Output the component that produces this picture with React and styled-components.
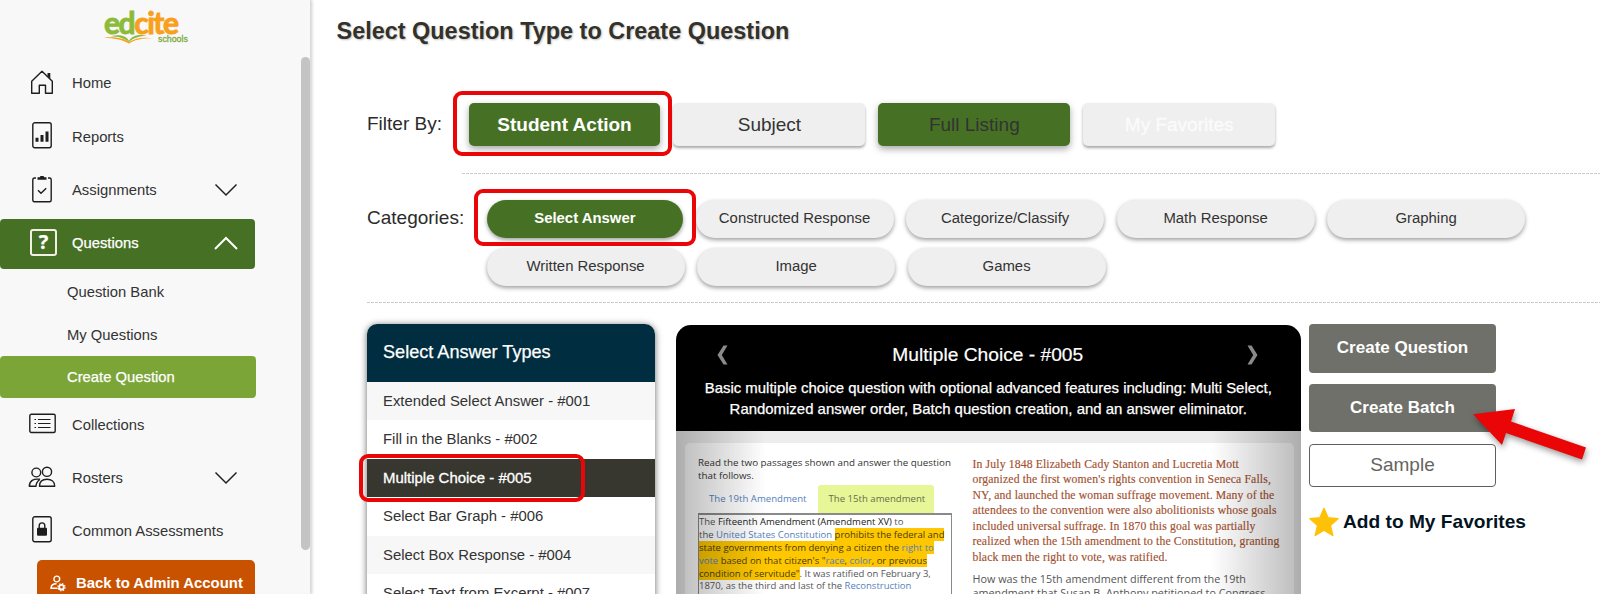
import React from "react";
import styled, { createGlobalStyle, css } from "styled-components";

const GlobalStyle = createGlobalStyle`
  * { box-sizing: border-box; }
  body {
    margin: 0;
    background: #fff;
    font-family: "Liberation Sans", Arial, sans-serif;
    color: #2f2f2f;
    overflow: hidden;
  }
`;

const Page = styled.div`
  display: flex;
  width: 1600px;
  height: 594px;
  overflow: hidden;
`;

/* ---------- Sidebar ---------- */

const Sidebar = styled.aside`
  display: flex;
  flex: none;
  width: 311px;
  height: 594px;
  background: #f8f8f8;
  border-right: 1px solid #dcdcdc;
  box-shadow: 1px 0 3px rgba(0, 0, 0, 0.2);
`;

const SidebarBody = styled.div`
  display: flex;
  flex-direction: column;
  width: 301px;
  > * { flex-shrink: 0; }
`;

const ScrollTrack = styled.div`
  width: 9px;
  padding-top: 57px;
`;

const ScrollThumb = styled.div`
  height: 493px;
  border-radius: 5px;
  background: #c4c4c4;
`;

const Logo = styled.div`
  height: 56px;
  padding: 7px 0 0 104px;
`;

const LogoName = styled.div`
  height: 27px;
  font: 700 30px/31px Lato, sans-serif;
  letter-spacing: -1.45px;
  color: #8cbb3c;
  -webkit-text-stroke: 0.9px currentColor;
  white-space: nowrap;
`;

const LogoAccent = styled.span`
  color: #f99f1c;
`;

const LogoFoot = styled.div`
  display: flex;
  gap: 3px;
  height: 12px;
`;

const LogoSub = styled.span`
  font-size: 8.8px;
  line-height: 10px;
  color: #7eaa3f;
  -webkit-text-stroke: 0.3px #7eaa3f;
`;

const NavItem = styled.div`
  display: flex;
  align-items: center;
  width: 255px;
  height: ${(p) => p.$h || 53}px;
  padding-right: 17px;
  font-size: 14.8px;
  color: #333;
  svg { flex: none; }
  ${(p) =>
    p.$active &&
    css`
      height: 50px;
      margin: 3px 0 2px;
      padding-bottom: 2px;
      border-radius: 4px;
      background: #467125;
      color: #fff;
      -webkit-text-stroke: 0.25px #fff;
    `}
`;

const NavIcon = styled.span`
  display: flex;
  justify-content: center;
  align-items: center;
  width: 84px;
  padding-bottom: 2px;
  margin-right: -12px;
`;

const NavLabel = styled.span`
  flex: 1;
  white-space: nowrap;
`;

const SubItem = styled.div`
  display: flex;
  align-items: center;
  width: 256px;
  height: ${(p) => p.$h || 42}px;
  padding-left: 67px;
  font-size: 14.8px;
  color: #333;
  ${(p) =>
    p.$active &&
    css`
      border-radius: 4px;
      background: #7ca537;
      color: #fff;
      -webkit-text-stroke: 0.25px #fff;
    `}
`;

const AdminButton = styled.div`
  display: flex;
  align-items: center;
  flex: none;
  gap: 10px;
  width: 218px;
  height: 46px;
  margin: 3px 0 0 37px;
  padding-left: 13px;
  border-radius: 5px;
  background: #c95200;
  color: #fff;
  font-size: 14.9px;
  font-weight: 700;
  white-space: nowrap;
`;

/* ---------- Main ---------- */

const Main = styled.main`
  display: flex;
  flex-direction: column;
  width: 1289px;
  padding-top: 16px;
`;

const Title = styled.h1`
  margin: 0 0 57px 25.5px;
  font-size: 23.45px;
  line-height: 30px;
  color: #32322b;
  text-shadow: 1px 1px 2px rgba(0, 0, 0, 0.25);
`;

const Row = styled.div`
  display: flex;
  padding-left: 56px;
`;

const RowLabel = styled.div`
  width: ${(p) => p.$w}px;
  flex: none;
  font-size: 19px;
  line-height: ${(p) => p.$lh}px;
  color: #2b2b2b;
  white-space: nowrap;
`;

const FilterButtons = styled.div`
  display: flex;
  gap: 13px;
`;

const FilterButton = styled.div`
  position: relative;
  width: 191.9px;
  height: 43px;
  border-radius: 5px;
  background: ${(p) => (p.$green ? "#467125" : "#efefef")};
  color: ${(p) => p.$color || "#333"};
  font-size: 19px;
  font-weight: ${(p) => (p.$bold ? 700 : 400)};
  line-height: 43px;
  text-align: center;
  box-shadow: ${(p) =>
    p.$green ? "0 3px 7px rgba(0,0,0,.35)" : "0 2px 3px rgba(0,0,0,.35)"};
  ${(p) => p.$soft && "-webkit-text-stroke: 0.4px #fbfbfb;"}
`;

const Rule = styled.div`
  flex: none;
  height: 1px;
  margin: ${(p) => p.$top}px 0 ${(p) => p.$bottom}px ${(p) => p.$left}px;
  background: repeating-linear-gradient(90deg, #cbcbcb 0 3px, transparent 3px 4px);
`;

const Pills = styled.div`
  display: flex;
  flex-wrap: wrap;
  gap: 10px 12.5px;
  width: 1045px;
`;

const Pill = styled.div`
  position: relative;
  width: ${(p) => (p.$active ? 196.5 : 198)}px;
  height: 38px;
  border-radius: 19px;
  background: ${(p) => (p.$active ? "#467125" : "#efefef")};
  color: ${(p) => (p.$active ? "#fff" : "#333")};
  font-size: 14.9px;
  font-weight: ${(p) => (p.$active ? 700 : 400)};
  line-height: 37px;
  text-align: center;
  box-shadow: 0 2px 4px rgba(0, 0, 0, 0.38);
`;

/* Red outline drawn over a control */
const Marker = styled.span`
  position: absolute;
  z-index: 3;
  top: ${(p) => p.$t}px;
  right: ${(p) => p.$r}px;
  bottom: ${(p) => p.$b}px;
  left: ${(p) => p.$l}px;
  border: 4px solid #ea0606;
  border-radius: 9px;
`;

const Columns = styled.div`
  display: flex;
  align-items: flex-start;
  padding-left: 56px;
`;

const TypeList = styled.div`
  width: 287.5px;
  height: 300px;
  margin-right: 21.5px;
  border-radius: 10px 10px 0 0;
  box-shadow: 0 1px 7px rgba(0, 0, 0, 0.6);
  background: #fff;
`;

const TypeHeader = styled.div`
  height: 58px;
  padding-left: 16px;
  border-radius: 10px 10px 0 0;
  background: #002e40;
  color: #fff;
  font-size: 18.1px;
  line-height: 57px;
  -webkit-text-stroke: 0.25px #fff;
`;

const TypeRow = styled.div`
  position: relative;
  height: 38.4px;
  padding-left: 16px;
  font-size: ${(p) => (p.$active ? 14.95 : 14.87)}px;
  line-height: 38px;
  white-space: nowrap;
  background: ${(p) => (p.$active ? "#37372f" : p.$odd ? "#f7f7f7" : "#fff")};
  color: ${(p) => (p.$active ? "#fff" : "#333")};
  ${(p) => p.$active && "-webkit-text-stroke: 0.3px #fff;"}
`;

const Preview = styled.div`
  width: 624.5px;
  margin: 1px 8.5px 0 0;
  border-radius: 15px 15px 0 0;
  overflow: hidden;
  background: #000;
`;

const PreviewHeader = styled.div`
  height: 106.5px;
  padding: 19px 16px 0 41px;
  color: #fff;
  text-align: center;
`;

const PreviewTop = styled.div`
  display: flex;
  justify-content: space-between;
  align-items: center;
  height: 23px;
  padding-right: 26px;
  font-size: 19.2px;
  -webkit-text-stroke: 0.2px #fff;
`;

const PreviewText = styled.div`
  margin: 10px 12px 0 -13px;
  font-size: 14.95px;
  line-height: 21px;
  white-space: nowrap;
  -webkit-text-stroke: 0.25px #fff;
`;

const PreviewBody = styled.div`
  position: relative;
  height: 180px;
  padding: 11.5px 6.5px 0 9px;
  background: #ededed;
`;

const SideShade = styled.div`
  position: absolute;
  top: 0;
  bottom: 0;
  width: 90px;
  ${(p) => (p.$right ? "right: 0;" : "left: 0;")}
  background: linear-gradient(
    ${(p) => (p.$right ? "270deg" : "90deg")},
    rgba(0, 0, 0, 0.27),
    rgba(0, 0, 0, 0)
  );
`;

const Paper = styled.div`
  display: flex;
  height: 180px;
  padding-left: 13px;
  border-radius: 5px;
  background: #fff;
`;

const LeftPane = styled.div`
  width: 274.5px;
  padding-top: 13.5px;
  font-family: "Open Sans", sans-serif;
  font-size: 9.8px;
  line-height: 13px;
  color: #333;
  white-space: nowrap;
`;

const Tabs = styled.div`
  display: flex;
  height: 27.5px;
  margin-top: 3px;
  font-size: 9.6px;
`;

const Tab = styled.div`
  width: ${(p) => (p.$active ? 116.5 : 119.5)}px;
  padding-left: 11px;
  line-height: 28px;
  color: ${(p) => (p.$active ? "#686f4c" : "#5481bd")};
  border-radius: 3px 3px 0 0;
  background: ${(p) => (p.$active ? "#e7f697" : "transparent")};
`;

const Passage = styled.div`
  width: 254px;
  height: 100px;
  padding: 1.5px 0 0;
  border: 2px solid #8a8a8a;
  border-left-width: 1px;
  border-right-width: 1px;
  font-size: 9.5px;
  line-height: 12.8px;
  color: #555;
`;

const Link = styled.span`
  color: #5481bd;
`;

const Strong = styled.span`
  color: #222;
`;

const Mark = styled.span`
  background: #fec700;
  color: #4a3d08;
`;

const RightPane = styled.div`
  padding-top: 14px;
  white-space: nowrap;
`;

const Story = styled.p`
  margin: 0;
  font-family: "Liberation Serif", serif;
  font-size: 11.7px;
  line-height: 15.5px;
  letter-spacing: 0.14px;
  color: #a2502f;
  -webkit-text-stroke: 0.15px #a2502f;
`;

const Ask = styled.p`
  margin: 6.5px 0 0;
  font-family: "Open Sans", sans-serif;
  font-size: 10.8px;
  line-height: 14.3px;
  color: #555;
`;

const Actions = styled.div`
  display: flex;
  flex-direction: column;
`;

const ActionButton = styled.div`
  position: relative;
  width: 187px;
  height: 48.6px;
  margin-bottom: 11.3px;
  border-radius: 4px;
  background: #70706a;
  color: #fff;
  font-size: 17px;
  font-weight: 700;
  line-height: 48px;
  text-align: center;
`;

const SampleButton = styled.div`
  width: 187px;
  height: 43px;
  border: 1px solid #60605a;
  border-radius: 4px;
  color: #65655f;
  font-size: 19px;
  line-height: 39px;
  text-align: center;
`;

const Favorite = styled.div`
  display: flex;
  align-items: center;
  gap: 4px;
  margin-top: 20px;
  color: #04141f;
  font-size: 19.15px;
  font-weight: 700;
  line-height: 30px;
  white-space: nowrap;
`;

const Pointer = styled.svg`
  position: absolute;
  z-index: 4;
  left: 159px;
  top: 20px;
  filter: drop-shadow(1px 3px 3px rgba(0, 0, 0, 0.4));
`;

/* ---------- Drawings ---------- */

const line = { fill: "none", stroke: "#1d1d1d", strokeWidth: 1.4 };

const HomeIcon = () => (
  <svg width="24" height="26" viewBox="0 0 24 26" {...line}>
    <path d="M1.7 24.2V12.3L12 2.2l10.3 10.1v11.9h-6.8v-7.9H9.3v7.9z" strokeLinejoin="round" />
    <path d="M17.5 4h2.8v5.8l-2.8-2.7z" fill="#1d1d1d" stroke="none" />
  </svg>
);

const ReportsIcon = () => (
  <svg width="20" height="27" viewBox="0 0 20 27" {...line}>
    <rect x="0.8" y="0.8" width="18.4" height="25" rx="2" />
    <path d="M3.5 15.8h3v4h-3zM8.5 13h3v6.8h-3zM13.5 9.5h3v10.300h-3z" fill="#1d1d1d" stroke="none" />
  </svg>
);

const ClipIcon = () => (
  <svg width="20" height="28" viewBox="0 0 20 28" {...line}>
    <path d="M4 3H2.5Q.8 3 .8 4.7v20.3Q.8 26.8 2.5 26.8h15q1.7 0 1.7-1.8V4.7Q19.2 3 17.5 3H16" />
    <path d="M5.5 4.8V2.2h2.2L8.5 1h3l.8 1.2h2.2v2.6z" fill="#1d1d1d" stroke="none" />
    <path d="M6 15.3l3 3 5.2-5" />
  </svg>
);

const QuestionMark = styled.span`
  display: flex;
  align-items: center;
  justify-content: center;
  width: 27px;
  height: 27px;
  margin-left: 3px;
  border: 2px solid #f4efe4;
  border-radius: 3px;
  font: 700 20px/24px "Open Sans", sans-serif;
`;

const CollectionsIcon = () => (
  <svg width="27" height="21" viewBox="0 0 27 21" {...line}>
    <rect x="0.8" y="1.2" width="25.4" height="18.3" rx="1.5" />
    <path d="M9 6.5h12.5M9 10.5h12.5M9 14.5h12.5M5.5 6.5h1.5M5.5 10.5h1.5M5.5 14.5h1.5" strokeWidth="1.1" />
  </svg>
);

const RostersIcon = () => (
  <svg width="28" height="22" viewBox="0 0 28 22" {...line}>
    <circle cx="8.3" cy="6.5" r="4.4" />
    <circle cx="19" cy="5.8" r="4.6" />
    <path d="M11.5 20.3c0-4.5 3-7 7.5-7s7.7 2.5 7.7 7z" strokeLinejoin="round" />
    <path d="M12 13.3c-6.5-1-10.7 1.5-10.7 7h6.700c0-2.500 1.500-5 4-7" strokeLinejoin="round" />
  </svg>
);

const LockIcon = () => (
  <svg width="20" height="27" viewBox="0 0 20 27" {...line}>
    <rect x="0.8" y="0.8" width="18.4" height="25" rx="2" />
    <rect x="5" y="11.8" width="10" height="8" rx="1" fill="#1d1d1d" stroke="none" />
    <path d="M7.2 12v-2.3a2.8 2.8 0 0 1 5.6 0V12" />
  </svg>
);

const Chevron = ({ up }) => (
  <svg width="24" height="14" viewBox="0 0 24 14" fill="none" stroke={up ? "#fff" : "#222"} strokeWidth={up ? 2 : 1.5}>
    <path d={up ? "M1 13L12 2l11 11" : "M1.5 1.5L12 12 22.5 1.5"} />
  </svg>
);

const AdminIcon = () => (
  <svg width="16" height="17" viewBox="0 0 16 17" fill="none" stroke="#fff" strokeWidth="1.4">
    <circle cx="6.8" cy="4" r="2.9" />
    <path d="M7.5 13.3H1c0-3 2-4.5 5.5-4.5" />
    <circle cx="11.5" cy="12.2" r="2.3" strokeWidth="1.8" />
    <circle cx="11.5" cy="12.2" r="3.6" strokeWidth="1.2" strokeDasharray="1.4 1.43" />
  </svg>
);

const BookIcon = () => (
  <svg width="51" height="10" viewBox="0 0 51 10">
    <path d="M0 3.8c9-1.2 19 0 25 4.200C31 3.800 40 2.800 50 4.300c-10-.2-19 .9-25 5.300C18 5.600 10 4.200 0 3.800z" fill="#f99f1c" />
    <path d="M7 2.200c7-2 15-1 18 4.600 3-5.600 11-7 18-4.900-7-.1-13.500 1.700-18 6.100C20 3.800 14 2.400 7 2.200z" fill="#8cbb3c" />
  </svg>
);

const Arrow = ({ right }) => (
  <svg width="11" height="20" viewBox="0 0 11 20" fill="#8a8a8a" transform={right ? "scale(-1 1)" : undefined}>
    <path d="M6.5.5h4L4.8 10l5.7 9.5h-4L.5 10z" />
  </svg>
);

const Star = () => (
  <svg width="30" height="30" viewBox="0 0 30 30" fill="#ffc107" stroke="#ffc107" strokeWidth="1.5" strokeLinejoin="round">
    <path d="M15 1.5l4 9.300 10 .9-7.600 6.700 2.300 10L15 23.100l-8.700 5.300 2.300-10L1 11.700l10-.9z" />
  </svg>
);

/* ---------- Data ---------- */

const types = [
  "Extended Select Answer - #001",
  "Fill in the Blanks - #002",
  "Multiple Choice - #005",
  "Select Bar Graph - #006",
  "Select Box Response - #004",
  "Select Text from Excerpt - #007",
];

const categories = [
  "Select Answer",
  "Constructed Response",
  "Categorize/Classify",
  "Math Response",
  "Graphing",
  "Written Response",
  "Image",
  "Games",
];

const story = [
  "In July 1848 Elizabeth Cady Stanton and Lucretia Mott",
  "organized the first women's rights convention in Seneca Falls,",
  "NY, and launched the woman suffrage movement. Many of the",
  "attendees to the convention were also abolitionists whose goals",
  "included universal suffrage. In 1870 this goal was partially",
  "realized when the 15th amendment to the Constitution, granting",
  "black men the right to vote, was ratified.",
];

function Nav({ icon, label, chevron, ...rest }) {
  return (
    <NavItem {...rest}>
      <NavIcon>{icon}</NavIcon>
      <NavLabel>{label}</NavLabel>
      {chevron && <Chevron up={chevron === "up"} />}
    </NavItem>
  );
}

export default function App() {
  return (
    <Page>
      <GlobalStyle />
      <Sidebar>
        <SidebarBody>
          <Logo>
            <LogoName>ed<LogoAccent>cite</LogoAccent></LogoName>
            <LogoFoot>
              <BookIcon />
              <LogoSub>schools</LogoSub>
            </LogoFoot>
          </Logo>
          <Nav $h={54} icon={<HomeIcon />} label="Home" />
          <Nav icon={<ReportsIcon />} label="Reports" />
          <Nav icon={<ClipIcon />} label="Assignments" chevron="down" />
          <Nav $active icon={<QuestionMark>?</QuestionMark>} label="Questions" chevron="up" />
          <SubItem>Question Bank</SubItem>
          <SubItem $h={43}>My Questions</SubItem>
          <SubItem $active>Create Question</SubItem>
          <Nav icon={<CollectionsIcon />} label="Collections" />
          <Nav icon={<RostersIcon />} label="Rosters" chevron="down" />
          <Nav icon={<LockIcon />} label="Common Assessments" />
          <AdminButton><AdminIcon />Back to Admin Account</AdminButton>
        </SidebarBody>
        <ScrollTrack><ScrollThumb /></ScrollTrack>
      </Sidebar>

      <Main>
        <Title>Select Question Type to Create Question</Title>
        <Row>
          <RowLabel $w={101.6} $lh={41}>Filter By:</RowLabel>
          <FilterButtons>
            <FilterButton $green $bold $color="#fff">
              Student Action
              <Marker $t={-12} $r={-12} $b={-10} $l={-16} />
            </FilterButton>
            <FilterButton>Subject</FilterButton>
            <FilterButton $green>Full Listing</FilterButton>
            <FilterButton $soft $color="#fbfbfb">My Favorites</FilterButton>
          </FilterButtons>
        </Row>
        <Rule $top={27} $bottom={26.4} $left={151} />
        <Row>
          <RowLabel $w={119.6} $lh={35}>Categories:</RowLabel>
          <Pills>
            {categories.map((c, i) => (
              <Pill key={c} $active={i === 0}>
                {c}
                {i === 0 && <Marker $t={-11.4} $r={-12.5} $b={-7.6} $l={-13} />}
              </Pill>
            ))}
          </Pills>
        </Row>
        <Rule $top={15.6} $bottom={21} $left={56} />
        <Columns>
          <TypeList>
            <TypeHeader>Select Answer Types</TypeHeader>
            {types.map((t, i) => (
              <TypeRow key={t} $odd={i % 2 === 0} $active={i === 2}>
                {t}
                {i === 2 && <Marker $t={-5} $r={69.5} $b={-5} $l={-8} />}
              </TypeRow>
            ))}
          </TypeList>

          <Preview>
            <PreviewHeader>
              <PreviewTop>
                <Arrow />
                <span>Multiple Choice - #005</span>
                <Arrow right />
              </PreviewTop>
              <PreviewText>
                Basic multiple choice question with optional advanced features including: Multi Select,
                <br />
                Randomized answer order, Batch question creation, and an answer eliminator.
              </PreviewText>
            </PreviewHeader>
            <PreviewBody>
              <Paper>
                <LeftPane>
                  Read the two passages shown and answer the question
                  <br />
                  that follows.
                  <Tabs>
                    <Tab>The 19th Amendment</Tab>
                    <Tab $active>The 15th amendment</Tab>
                  </Tabs>
                  <Passage>
                    The <Strong>Fifteenth Amendment (Amendment XV)</Strong> to<br />
                    the <Link>United States Constitution</Link> <Mark>prohibits the federal and</Mark><br />
                    <Mark>state governments from denying a citizen the <Link>right to</Link></Mark><br />
                    <Mark><Link>vote</Link> based on that citizen's "<Link>race</Link>, <Link>color</Link>, or previous</Mark><br />
                    <Mark>condition of servitude"</Mark>. It was ratified on February 3,<br />
                    1870, as the third and last of the <Link>Reconstruction</Link>
                  </Passage>
                </LeftPane>
                <RightPane>
                  <Story>
                    {story.map((s) => (
                      <React.Fragment key={s}>{s}<br /></React.Fragment>
                    ))}
                  </Story>
                  <Ask>
                    How was the 15th amendment different from the 19th
                    <br />
                    amendment that Susan B. Anthony petitioned to Congress
                  </Ask>
                </RightPane>
              </Paper>
              <SideShade />
              <SideShade $right />
            </PreviewBody>
          </Preview>

          <Actions>
            <ActionButton>Create Question</ActionButton>
            <ActionButton>
              Create Batch
              <Pointer width="130" height="66" viewBox="0 0 130 66">
                <path d="M5 10.3L47 5l-4 12.5 75 26-4 12L38 29l-4 12z" fill="#ea0606" />
              </Pointer>
            </ActionButton>
            <SampleButton>Sample</SampleButton>
            <Favorite><Star />Add to My Favorites</Favorite>
          </Actions>
        </Columns>
      </Main>
    </Page>
  );
}
